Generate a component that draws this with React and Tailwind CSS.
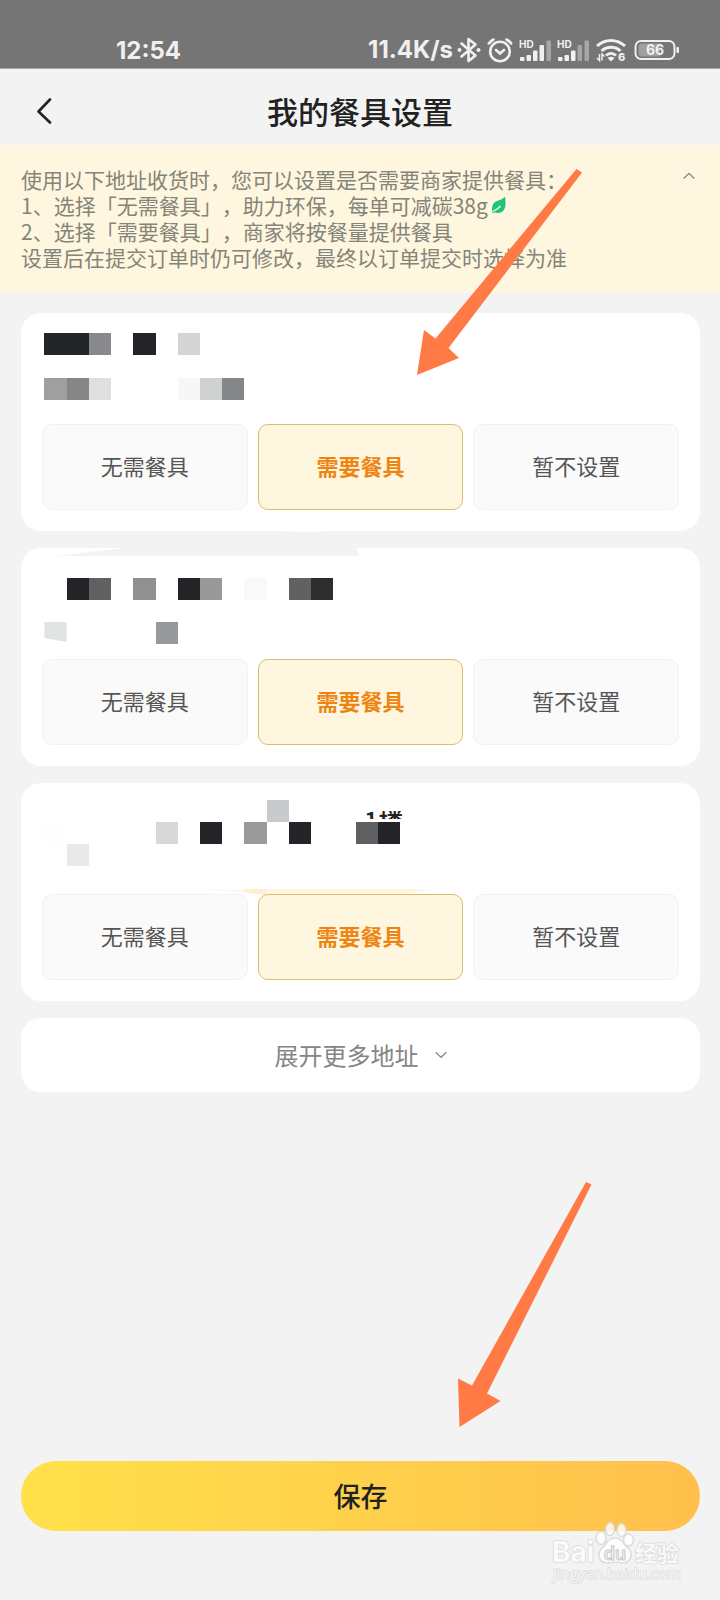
import React, { useState } from 'react'

const OPTIONS = ['无需餐具', '需要餐具', '暂不设置']

// Masked address blocks: [column, y, colour], columns are CELL wide
const CELL = 22.22

const ADDRESSES = [
  {
    id: 'a1',
    blocks: [
      [1, 20, '#232526'], [2, 20, '#232526'], [3, 20, '#88898b'], [5, 20, '#232427'], [7, 20, '#d5d5d5'],
      [1, 65, '#9f9f9f'], [2, 65, '#858688'], [3, 65, '#dfdfdf'], [7, 65, '#f7f7f7'], [8, 65, '#cfd0d0'], [9, 65, '#858688'],
    ],
  },
  {
    id: 'a2',
    blocks: [
      [2, 30, '#232427'], [3, 30, '#606163'], [5, 30, '#8f9092'], [7, 30, '#232427'], [8, 30, '#989898'],
      [10, 30, '#f9f9f9'], [12, 30, '#606163'], [13, 30, '#2c2d2f'], [6, 74, '#98999b'],
    ],
  },
  {
    id: 'a3',
    blocks: [
      [11, 17, '#c9cacc'], [1, 39, '#fefefc'], [6, 39, '#d8d8d8'], [8, 39, '#232427'], [10, 39, '#9a9a9a'],
      [12, 39, '#232427'], [15, 39, '#5f6062'], [16, 39, '#232427'], [2, 61, '#e9e9e9'],
    ],
  },
]

const Chevron = ({ up }) => (
  <svg width="12" height="8" viewBox="0 0 12 8" fill="none" stroke="#858585" strokeWidth="1.3" aria-hidden="true">
    <path d={up ? 'M0.7 6.5 6 1.3l5.3 5.2' : 'M0.7 1.2 6 6.4l5.3-5.2'} />
  </svg>
)

const Signal = ({ dim }) => (
  <svg width="33" height="24" viewBox="0 0 33 24" fill="#f0f0f0" aria-hidden="true">
    <text x="0" y="10" fontSize="10" fontWeight="700" fontFamily="Inter, sans-serif">HD</text>
    {[[1, 19, 4], [7.5, 17, 6], [14, 12.5, 10.5], [20.5, 7, 16], [27.5, 2.5, 20.5]].map(([x, y, h], i) => (
      <rect key={x} x={x} y={y} width="4.5" height={h} rx="1" opacity={i >= dim ? 0.4 : 1} />
    ))}
  </svg>
)

const StatusBar = () => (
  <div className="flex h-[69px] items-end justify-between border-b border-[#a8a8a8] bg-[#757575] pr-10 pb-[5px] pl-[116px] font-[Inter,sans-serif] text-[24px] leading-6 font-bold text-[#f0f0f0]">
    <span>12:54</span>
    <div className="flex items-center">
      <span className="whitespace-nowrap">11.4K/s</span>
      <svg className="ml-1" width="24" height="26" viewBox="0 0 24 26" fill="none" stroke="#f0f0f0" strokeWidth="2.600" aria-hidden="true">
        <path d="M4.500 6.500 18.500 18.500 11.500 24V2l7 5.500L4.500 19.500" strokeLinejoin="round" strokeLinecap="round" />
        <circle cx="2.500" cy="13" r="2" fill="#f0f0f0" stroke="none" />
        <circle cx="21.500" cy="13" r="2" fill="#f0f0f0" stroke="none" />
      </svg>
      <svg className="ml-1.5" width="26" height="26" viewBox="0 0 26 26" fill="none" stroke="#f0f0f0" strokeWidth="2.600" strokeLinecap="round" aria-hidden="true">
        <circle cx="13" cy="14.500" r="9.800" />
        <path d="M9 13l4 3.500 4-3.500M1.800 6.500C3 4.800 4.500 3.600 6.500 2.500M24.200 6.500C23 4.800 21.500 3.600 19.500 2.500" />
      </svg>
      <div className="ml-1.5 flex gap-[5px]">
        <Signal dim={4} />
        <Signal dim={3} />
      </div>
      <svg className="ml-1.5 overflow-visible" width="30" height="24" viewBox="0 0 30 24" fill="none" stroke="#f0f0f0" strokeWidth="3" aria-hidden="true">
        <path d="M1 8C9 .5 21 .5 29 8M5.500 13c5.500-5 13.500-5 19 0M10 17.500c3-2.800 7-2.800 10 0" />
        <path d="M11.500 20c2-1.800 5-1.800 7 0L15 23.500z" fill="#f0f0f0" stroke="none" />
        <path d="M3.500 16v6.500L1 20M6 22.500V16l2.500 2.500" strokeWidth="1.500" />
        <text x="22" y="23" fontSize="11" fontWeight="800" fill="#f0f0f0" stroke="none" fontFamily="Inter, sans-serif">6</text>
      </svg>
      <svg className="ml-2" width="46" height="22" viewBox="0 0 46 22" aria-hidden="true">
        <rect x="1.500" y="2" width="39" height="18" rx="5.500" fill="none" stroke="#f0f0f0" strokeWidth="2" />
        <path d="M8 4.500h18v13H8a3.500 3.500 0 0 1-3.500-3.500V8A3.500 3.500 0 0 1 8 4.500z" fill="#a0a0a0" />
        <rect x="42.500" y="8" width="2.500" height="6" rx="1" fill="#f0f0f0" />
        <text x="21" y="16" textAnchor="middle" fontSize="14" fontWeight="700" fill="#f0f0f0" fontFamily="Inter, sans-serif">66</text>
      </svg>
    </div>
  </div>
)

const Header = () => (
  <header className="relative flex h-[76px] items-center justify-center pt-2">
    <button type="button" aria-label="返回" className="absolute left-8 p-1">
      <svg width="16" height="26" viewBox="0 0 16 26" fill="none" stroke="#232323" strokeWidth="2.600" strokeLinejoin="round" strokeLinecap="round" aria-hidden="true">
        <path d="M14 1.500 2.500 13.500 14 24.500" />
      </svg>
    </button>
    <h1 className="text-[31px] font-medium text-[#222]">我的餐具设置</h1>
  </header>
)

const Notice = () => (
  <section className="flex items-start justify-between bg-[#fef6df] px-[21px] pt-[21px] pb-[23px]">
    <div className="text-[21px] leading-[26px] whitespace-nowrap text-[#858479] [text-spacing-trim:space-all]">
      <p>使用以下地址收货时，您可以设置是否需要商家提供餐具：</p>
      <p className="flex items-center">
        1、选择「无需餐具」，助力环保，每单可减碳38g
        <svg className="ml-1" width="14" height="18" viewBox="0 0 14 18" aria-hidden="true">
          <path d="M13 .5C14 8 14.500 16.500 6 17c-1.500.1-2.500-.2-3.500-.8L1 17.500l-.5-1C-.5 12 0 7.500 4 5.500 7.500 4 11 3.500 13 .5z" fill="#1fc47c" />
          <path d="M1 15.500c3-1.500 5.500-3 7.500-5.500" stroke="#fef6df" strokeWidth="1.300" fill="none" />
        </svg>
      </p>
      <p>2、选择「需要餐具」，商家将按餐量提供餐具</p>
      <p>设置后在提交订单时仍可修改，最终以订单提交时选择为准</p>
    </div>
    <button type="button" aria-label="收起说明" className="pt-1.5 pr-1">
      <Chevron up />
    </button>
  </section>
)

const MaskedAddress = ({ id, blocks }) => (
  <svg className="block overflow-visible" width="679" height="111" viewBox="0 0 679 111" aria-hidden="true">
    {blocks.map(([col, y, fill]) => (
      <rect
        key={`${col}-${y}`}
        x={col * CELL + 1.2}
        y={y}
        width={CELL}
        height={CELL}
        fill={fill}
        shapeRendering="crispEdges"
      />
    ))}
    {id === 'a1' && <path d="M253 217q30-1 61 0q-30 4-61 0z" fill="#fff" />}
    {id === 'a2' && (
      <>
        <path d="M35 8 102 0h233l4 8z" fill="#f3f3f3" />
        <path d="M23.400 74h22.200v20l-22.200-4z" fill="#e2e3e3" />
      </>
    )}
    {id === 'a3' && (
      <>
        <clipPath id="mask-cut">
          <rect x="340" y="28" width="50" height="8" />
        </clipPath>
        <text x="343" y="48" fontSize="25" fontWeight="500" fill="#222" clipPath="url(#mask-cut)">1楼</text>
        <path d="M180 106h45v4q-20-1-45-4z" fill="#fcfaf6" />
        <path d="M223 106h185q-8 3-30 6H245q-10-1-22-3z" fill="#fef6df" />
        <path d="M223 106h22v6q-12-1-22-3z" fill="#fcefd2" />
      </>
    )}
  </svg>
)

const AddressCard = ({ address, value, onChange }) => (
  <section className="rounded-[20px] bg-white pb-[21px]">
    <MaskedAddress id={address.id} blocks={address.blocks} />
    <div className="grid grid-cols-3 gap-2.5 px-[21px]">
      {OPTIONS.map((option) => (
        <button
          key={option}
          type="button"
          aria-pressed={value === option}
          onClick={() => onChange(option)}
          className={`h-[86px] rounded-[10px] border pb-1 text-[22px] ${
            value === option
              ? 'border-[#dcbc72] bg-[#fef6df] font-bold text-[#ee8512]'
              : 'border-[#f1f1f1] bg-[#fafafa] text-[#555]'
          }`}
        >
          {option}
        </button>
      ))}
    </div>
  </section>
)

const Watermark = () => (
  <svg className="pointer-events-none absolute right-8 bottom-3" width="140" height="68" viewBox="0 0 140 68" aria-hidden="true">
    <g fill="#fff" fillOpacity="0.8" stroke="#d6d6d6" strokeOpacity="0.8" strokeWidth="1.600" strokeLinejoin="round">
      <ellipse cx="53" cy="18" rx="5" ry="6.500" />
      <ellipse cx="62" cy="9" rx="4.500" ry="6.500" />
      <ellipse cx="73.500" cy="10" rx="4.500" ry="6.500" />
      <ellipse cx="80.500" cy="20" rx="5" ry="6" />
      <path d="M67 18c7 0 8 6 12.500 9.500C86 33 83 43 75 43c-3 0-5-1-8-1s-5 1-8 1c-8 0-11-10-4.500-15.500C59 24 60 18 67 18z" />
      <text x="4" y="42" fontSize="28" fontWeight="700" paintOrder="stroke" fontFamily="Inter, sans-serif">Bai</text>
      <text x="87" y="41" fontSize="22" fontWeight="700" paintOrder="stroke">经验</text>
      <text x="5" y="59" fontSize="15" paintOrder="stroke" fontFamily="'Open Sans', sans-serif">jingyan.baidu.com</text>
    </g>
    <text x="67" y="40" textAnchor="middle" fontSize="18" fontWeight="600" fill="#f3f3f3" stroke="#c9c9c9" strokeWidth="1" fontFamily="Inter, sans-serif">du</text>
  </svg>
)

const App = () => {
  const [choices, setChoices] = useState({ a1: '需要餐具', a2: '需要餐具', a3: '需要餐具' })

  const handleChange = (id, option) => {
    setChoices({ ...choices, [id]: option })
  }

  return (
    <div className="relative flex min-h-screen flex-col overflow-hidden bg-[#f3f3f3] font-['Noto_Sans_CJK_SC',sans-serif]">
      <StatusBar />
      <Header />
      <Notice />

      <main className="flex flex-col gap-[17px] pt-5 pr-5 pl-[21px]">
        {ADDRESSES.map((address) => (
          <AddressCard
            key={address.id}
            address={address}
            value={choices[address.id]}
            onChange={(option) => handleChange(address.id, option)}
          />
        ))}
        <button
          type="button"
          className="flex h-[74px] items-center justify-center gap-4 rounded-[20px] bg-white text-[24px] text-[#858585]"
        >
          展开更多地址
          <Chevron />
        </button>
      </main>

      <footer className="mt-auto pr-5 pb-[69px] pl-[21px]">
        <button
          type="button"
          className="h-[70px] w-full rounded-full bg-linear-to-r from-[#ffe14a] to-[#ffc04c] text-[27px] font-medium text-[#222]"
        >
          保存
        </button>
      </footer>

      {/* pointer arrows */}
      <svg className="pointer-events-none absolute top-[169px] left-[417px]" width="166" height="207" viewBox="0 0 166 207" fill="#ff7a45" aria-hidden="true">
        <path d="M159.500 0 165 3.500 31.500 179 42 189 0 206 7 161l11.500 8.500z" />
      </svg>
      <svg className="pointer-events-none absolute top-[1182px] left-[458px]" width="134" height="246" viewBox="0 0 134 246" fill="#ff7a45" aria-hidden="true">
        <path d="M128 0l5.500 2.500L29 211.500 42.500 219 1.500 245 0 196.500l14 7z" />
      </svg>
      <Watermark />
    </div>
  )
}

export default App
